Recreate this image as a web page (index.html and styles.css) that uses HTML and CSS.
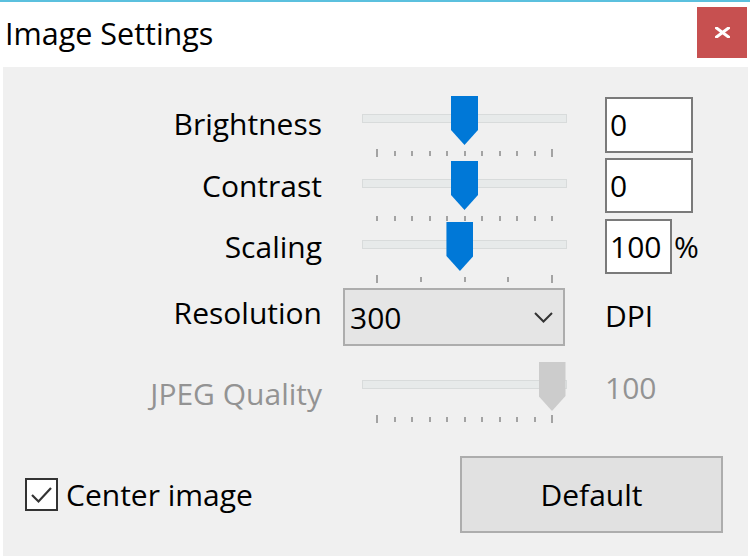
FILE: index.html
```html
<!DOCTYPE html>
<html>
<head>
<meta charset="utf-8">
<title>Image Settings</title>
<link rel="stylesheet" href="styles.css">
</head>
<body>
<div class="window">
  <div class="titlebar">
    <div class="title">Image Settings</div>
    <div class="close">
      <svg width="15" height="11" viewBox="0 0 15 11"><path d="M1.5 1 L13.5 10 M13.5 1 L1.5 10" stroke="#fff" stroke-width="3" stroke-linecap="square" fill="none"/></svg>
    </div>
  </div>
  <div class="content">
    <div class="row r1">
      <div class="label">Brightness</div>
      <div class="control">
        <div class="slider">
          <div class="track"></div>
          <div class="thumb" style="--v:0.5"></div>
          <div class="ticks"><span class="end"></span><span></span><span></span><span></span><span></span><span></span><span></span><span></span><span></span><span></span><span class="end"></span></div>
        </div>
      </div>
      <div class="value"><div class="textbox">0</div></div>
    </div>
    <div class="row r2">
      <div class="label">Contrast</div>
      <div class="control">
        <div class="slider">
          <div class="track"></div>
          <div class="thumb" style="--v:0.5"></div>
          <div class="ticks"><span></span><span></span><span></span><span></span><span></span><span></span><span></span><span></span><span></span><span></span><span></span></div>
        </div>
      </div>
      <div class="value"><div class="textbox">0</div></div>
    </div>
    <div class="row r3">
      <div class="label">Scaling</div>
      <div class="control">
        <div class="slider">
          <div class="track"></div>
          <div class="thumb" style="--v:0.474"></div>
          <div class="ticks"><span class="end"></span><span></span><span></span><span></span><span class="end"></span></div>
        </div>
      </div>
      <div class="value"><div class="textbox narrow">100</div><span class="unit">%</span></div>
    </div>
    <div class="row r4">
      <div class="label">Resolution</div>
      <div class="control">
        <div class="combo">
          <span>300</span>
          <svg width="19" height="11" viewBox="0 0 19 11"><path d="M1 1 L9.5 9.5 L18 1" stroke="#333" stroke-width="2" fill="none"/></svg>
        </div>
      </div>
      <div class="value"><span class="plain">DPI</span></div>
    </div>
    <div class="row r5 disabled">
      <div class="label">JPEG Quality</div>
      <div class="control">
        <div class="slider">
          <div class="track"></div>
          <div class="thumb" style="--v:1"></div>
          <div class="ticks"><span class="end"></span><span></span><span></span><span></span><span></span><span></span><span></span><span></span><span></span><span></span><span class="end"></span></div>
        </div>
      </div>
      <div class="value"><span class="plain">100</span></div>
    </div>
    <div class="bottom">
      <div class="check">
        <div class="box">
          <svg width="29" height="29" viewBox="0 0 29 29"><path d="M5 15 L11.5 21.5 L24 8" stroke="#333" stroke-width="2.2" fill="none"/></svg>
        </div>
        <span>Center image</span>
      </div>
      <div class="button">Default</div>
    </div>
  </div>
</div>
</body>
</html>
```

FILE: styles.css
```css
* { box-sizing: border-box; }
html, body { margin: 0; padding: 0; }
body {
  width: 750px;
  height: 559px;
  overflow: hidden;
  background: #ffffff;
  font-family: "Open Sans", "Noto Sans", sans-serif;
  font-size: 30px;
  color: #000;
}
.window {
  width: 750px;
  height: 559px;
  border-top: 2px solid #5bc0de;
  display: flex;
  flex-direction: column;
}
.titlebar {
  height: 65px;
  flex: none;
  display: flex;
  justify-content: space-between;
  align-items: flex-start;
}
.title {
  margin: 11px 0 0 5px;
  line-height: 40px;
  font-size: 30.5px;
}
.close {
  width: 50px;
  height: 51px;
  margin: 5px 3px 0 0;
  background: #c75050;
  display: flex;
  align-items: center;
  justify-content: center;
}
.content {
  flex: 1;
  margin: 0 2px 3px 3px;
  background: #f0f0f0;
  padding-top: 29px;
}
.row {
  display: flex;
  align-items: flex-start;
}
.r1 { height: 62px; }
.r2 { height: 61px; }
.r3 { height: 69px; }
.r4 { height: 74px; }
.r5 { height: 58px; }
.label {
  width: 319px;
  text-align: right;
  line-height: 40px;
  white-space: nowrap;
  margin-top: 8px;
}
.r4 .label { margin-top: 5px; }
.r5 .label { margin-top: 12px; }
.control {
  width: 224px;
  margin-left: 21px;
}
.value {
  margin-left: 38px;
  display: flex;
  align-items: center;
  line-height: 40px;
}
.slider {
  position: relative;
  width: 205px;
  margin-left: 19px;
  padding-top: 18px;
}
.r2 .slider, .r3 .slider { margin-top: 3px; }
.track {
  height: 9px;
  background: #e7eaea;
  border: 1px solid #d8dbdb;
}
.thumb {
  position: absolute;
  top: 0;
  left: calc(15px + var(--v) * 175px - 13.5px);
  width: 27px;
  height: 49px;
  background: #0078d7;
  clip-path: polygon(0 0, 100% 0, 100% 34px, 50% 49px, 0 34px);
}
.disabled .thumb { background: #cccccc; }
.ticks {
  margin-top: 26px;
  height: 8px;
  padding: 0 14px;
  display: flex;
  justify-content: space-between;
  align-items: center;
}
.ticks span {
  width: 2px;
  height: 5px;
  background: #a3a3a3;
}
.ticks span.end { height: 8px; }
.textbox {
  width: 88px;
  height: 55px;
  background: #fff;
  border: 2px solid #7a7a7a;
  padding-left: 3px;
  display: flex;
  align-items: center;
}
.r1 .textbox { margin-top: 1px; height: 56px; }
.textbox.narrow { width: 67px; }
.unit { margin-left: 2px; }
.combo {
  width: 222px;
  height: 58px;
  background: #e5e5e5;
  border: 2px solid #adadad;
  padding: 0 10px 0 5px;
  display: flex;
  align-items: center;
  justify-content: space-between;
}
.r4 .value { margin-top: 8px; }
.r5 .value { margin-top: 6px; }
.disabled .label, .disabled .plain { color: #939393; }
.bottom {
  margin-top: 36px;
  padding: 0 25px 0 22px;
  display: flex;
  justify-content: space-between;
  align-items: center;
}
.check {
  display: flex;
  align-items: center;
  gap: 8px;
}
.box {
  width: 33px;
  height: 33px;
  border: 2px solid #333;
  background: #fff;
  display: flex;
  align-items: center;
  justify-content: center;
}
.button {
  width: 263px;
  height: 77px;
  background: #e1e1e1;
  border: 2px solid #adadad;
  display: flex;
  align-items: center;
  justify-content: center;
}
```
